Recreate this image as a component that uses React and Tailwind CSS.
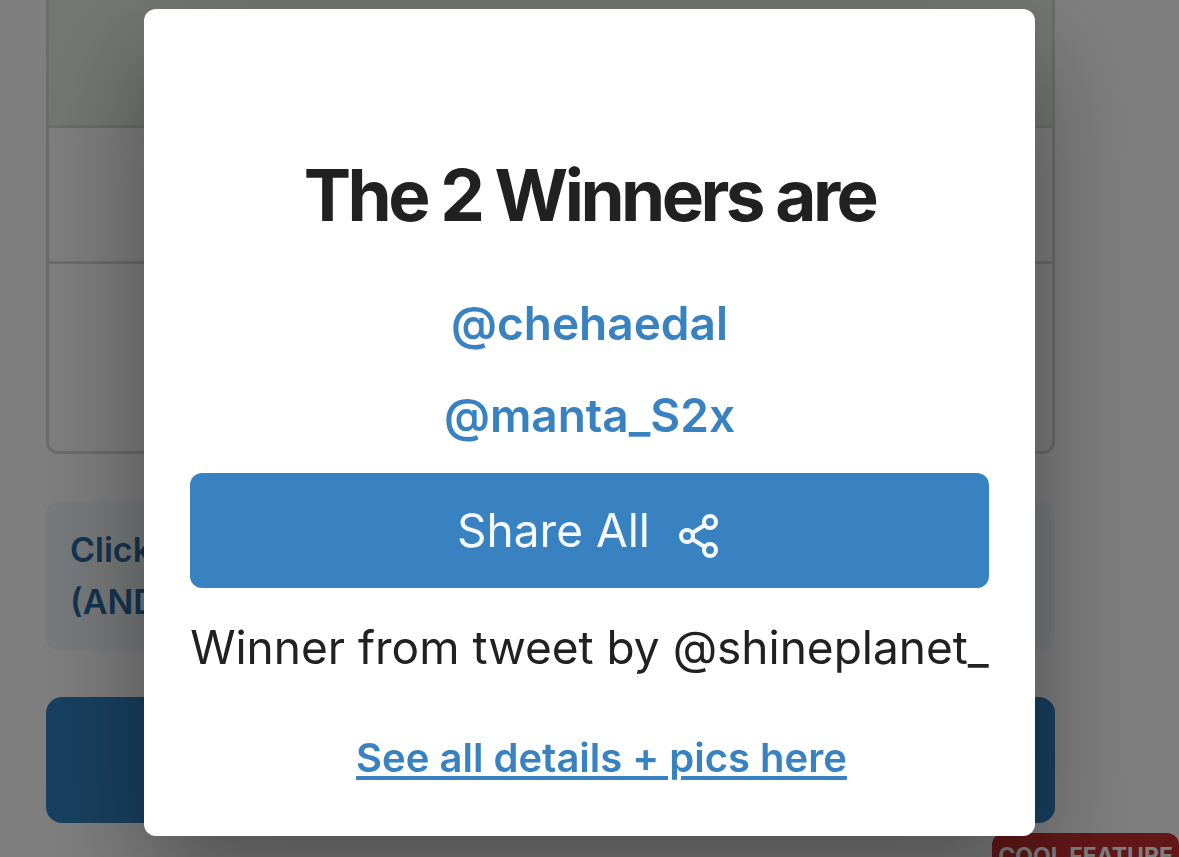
import React from 'react';

const winners = ['chehaedal', 'manta_S2x'];

const ShareIcon = () => (
  <svg
    className="mt-2 size-12"
    viewBox="0 0 48 48"
    fill="none"
    stroke="currentColor"
    strokeWidth="4"
    strokeLinecap="round"
    aria-hidden="true"
  >
    <circle cx="36" cy="11" r="6" />
    <circle cx="13" cy="25" r="6" />
    <circle cx="36" cy="39" r="6" />
    <path d="M18.2 22 30.8 14M18.2 28 30.8 36" />
  </svg>
);

const PageContent = () => (
  <main className="pl-[46px] pr-[124px]">
    <div className="overflow-hidden rounded-b-xl border-x-3 border-b-3 border-[#dadada]">
      <div className="h-[128px] border-b-3 border-[#dadada] bg-[#eaefea]" />
      <div className="h-[136px] border-b-3 border-[#dadada]" />
      <div className="h-[187px]" />
    </div>

    <div className="mt-12 rounded-xl bg-[#f1f7fb] px-6 py-[22px] text-[34px] leading-[52px] font-semibold text-[#2a6a9f]">
      <p>Click</p>
      <p>(AND</p>
    </div>

    <button
      type="button"
      aria-label="Pick winners"
      className="mt-[47px] block h-[126px] w-full rounded-2xl bg-[#3182c2]"
    />
  </main>
);

const WinnersModal = () => (
  <div className="fixed inset-0 flex items-start justify-center bg-black/50 pt-[9px]">
    <div
      role="dialog"
      aria-modal="true"
      aria-labelledby="winners-title"
      className="flex flex-col items-center rounded-xl bg-white px-[46px] pt-[144px] pb-12 text-[#212121] shadow-[0_43px_115px_rgba(0,0,0,0.4)]"
    >
      <h2 id="winners-title" className="text-[71px] leading-[84px] font-bold tracking-tighter">
        The 2 Winners are
      </h2>

      <ul className="mt-10 mb-3 flex flex-col items-center text-[46px] leading-[92px] font-semibold text-[#3882c2]">
        {winners.map((name) => (
          <li key={name}>
            <a href={`#${name}`}>@{name}</a>
          </li>
        ))}
      </ul>

      <button
        type="button"
        className="flex h-[115px] w-full items-center justify-center gap-6 rounded-xl bg-[#3882c2] text-[46px] text-[#f5faff]"
      >
        Share All
        <ShareIcon />
      </button>

      <p className="mt-6 text-[46px] leading-[70px] whitespace-nowrap">
        Winner from tweet by @shineplanet_
      </p>

      <a
        href="#details"
        className="mt-[46px] ml-6 text-[40px] leading-[60px] font-semibold text-[#3882c2] underline underline-offset-4"
      >
        See all details + pics here
      </a>
    </div>
  </div>
);

const App = () => (
  <div className="relative h-screen overflow-hidden bg-white font-[Inter,sans-serif]">
    <PageContent />
    <div className="absolute top-[833px] right-0 rounded-xl bg-[#c53030] px-1.5 py-2 text-[23px] leading-[30px] font-bold text-white">
      COOL FEATURE
    </div>
    <WinnersModal />
  </div>
);

export default App;
